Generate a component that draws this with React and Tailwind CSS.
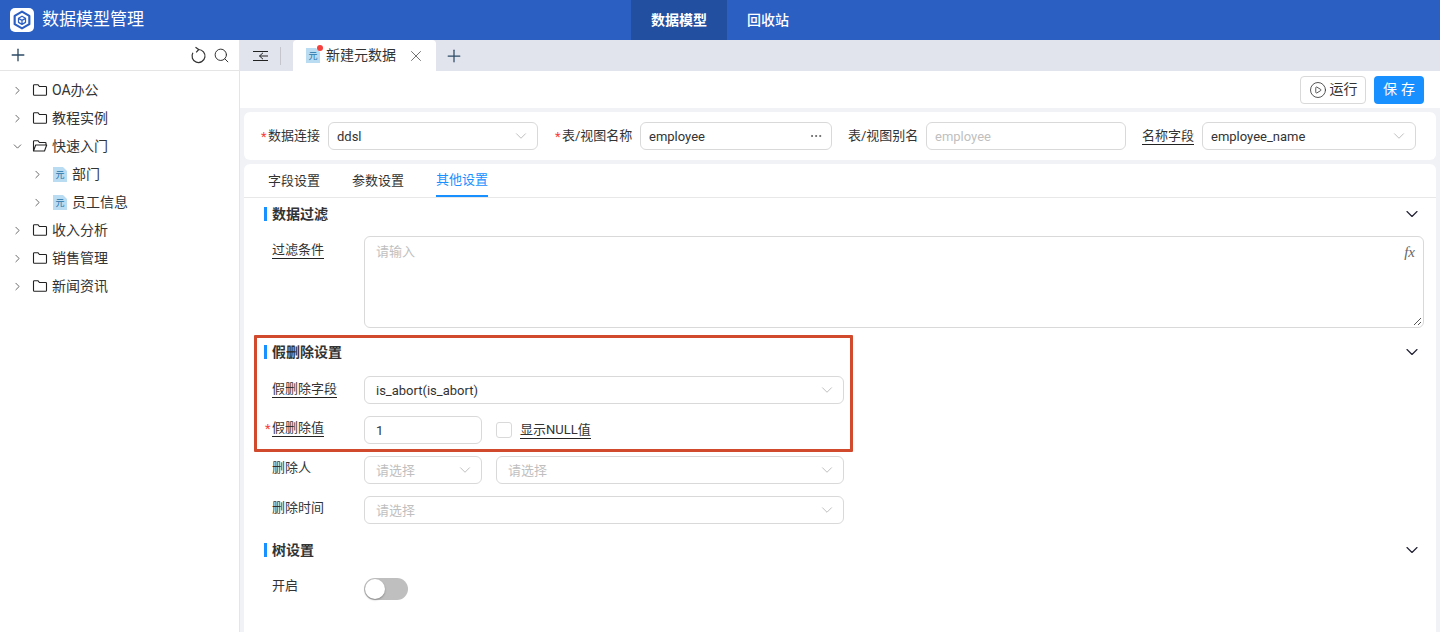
import { ChevronDown, ChevronRight, Plus, Search, X, Ellipsis, CirclePlay } from "lucide-react";

const font = "font-['Roboto','Noto_Sans_CJK_SC',sans-serif]";

function MetaIcon({ dot }) {
  return (
    <span className="relative flex h-[15px] w-[14px] shrink-0 items-center justify-center text-[9px] leading-none text-[#2472a8]">
      <svg className="absolute inset-0" width="14" height="15" viewBox="0 0 14 15">
        <path d="M0 0h10l4 4v11H0z" fill="#b9dcf2" />
      </svg>
      <span className="relative mt-[2px]">元</span>
      {dot && <span className="absolute -right-[3px] -top-[3px] h-[6px] w-[6px] rounded-full bg-[#f5403d]" />}
    </span>
  );
}

function FolderIcon({ open }) {
  return (
    <svg width="16" height="16" viewBox="0 0 16 16" fill="none" stroke="#222" strokeWidth="1.1" strokeLinejoin="round" className="mr-[4px] shrink-0">
      {open ? (
        <path d="M1.5 13V3.5a.8.8 0 0 1 .8-.8h3.6l1.5 1.8h5.8a.8.8 0 0 1 .8.8V7M1.5 13l2.2-6h11l-2.2 6z" />
      ) : (
        <path d="M1.5 3.5a.8.8 0 0 1 .8-.8h3.6l1.5 1.8h6.3a.8.8 0 0 1 .8.8v7.1a.8.8 0 0 1-.8.8H2.3a.8.8 0 0 1-.8-.8z" />
      )}
    </svg>
  );
}

function TreeRow({ label, open, child }) {
  const Arrow = open ? ChevronDown : ChevronRight;
  return (
    <div className={`flex h-7 items-center ${child ? "pl-[31px]" : "pl-[11px]"}`}>
      <Arrow size={13} className="mr-[8px] text-[#555]" strokeWidth={1.6} />
      {child ? (
        <span className="ml-px mr-[5px]"><MetaIcon /></span>
      ) : (
        <FolderIcon open={open} />
      )}
      <span className="pt-[1px] text-[14px] text-[#333]">{label}</span>
    </div>
  );
}

function Field({ value, placeholder, className = "", arrow, dots }) {
  return (
    <div className={`flex h-7 items-center justify-between rounded-[6px] border border-[#d9d9d9] bg-white pl-2 pr-[7px] text-[13px] ${className}`}>
      <span className={`pt-[1px] ${value ? "text-[#333]" : "text-[#bfbfbf]"}`}>{value || placeholder}</span>
      {arrow && <ChevronDown size={18} strokeWidth={1} className="text-[#aaa]" />}
      {dots && <Ellipsis size={14} strokeWidth={1.5} className="mr-[1px] text-[#555]" />}
    </div>
  );
}

function Label({ children, required, underline, className = "" }) {
  return (
    <div className={`relative shrink-0 text-[13px] leading-5 text-[#333] ${className}`}>
      {required && <span className="absolute -left-[7px] top-[1px] text-[#f5403d]">*</span>}
      <span className={underline ? "border-b border-[#222] pb-[1px]" : ""}>{children}</span>
    </div>
  );
}

function Section({ title, className = "" }) {
  return (
    <div className={`flex h-5 items-center justify-between pl-[20px] pr-[14px] ${className}`}>
      <div className="flex items-center gap-[5px]">
        <span className="h-[14px] w-[3px] bg-[#1890ff]" />
        <span className="text-[14px] font-bold text-[#333]">{title}</span>
      </div>
      <ChevronDown size={20} strokeWidth={1.4} className="text-[#223]" />
    </div>
  );
}

function FormRow({ className = "", children }) {
  return <div className={`flex items-start pl-[28px] ${className}`}>{children}</div>;
}

export default function App() {
  return (
    <div className={`flex h-[632px] w-[1440px] flex-col overflow-hidden bg-white ${font}`}>
      <header className="relative flex h-10 shrink-0 items-center bg-[#2b5fc2] pl-[10px]">
        <span className="flex h-6 w-6 items-center justify-center rounded-[5px] bg-white">
          <svg width="20" height="20" viewBox="0 0 24 24" fill="none" stroke="#2b5fc2" strokeLinejoin="round">
            <path d="M12 2 20.8 7v10L12 22 3.2 17V7z" strokeWidth="2.6" />
            <path d="M12 7.5 16.2 10v4.8L12 17.2 7.8 14.8V10zM7.8 10 12 12.4 16.2 10M12 12.4v4.8" strokeWidth="1.5" />
          </svg>
        </span>
        <span className="ml-[8px] text-[17px] text-white">数据模型管理</span>
        <nav className="ml-[487px] flex h-full text-[14px] text-white">
          <div className="flex w-[96px] items-center justify-center bg-[#224f9f] font-bold">数据模型</div>
          <div className="flex w-[82px] items-center justify-center font-medium">回收站</div>
        </nav>
      </header>

      <div className="flex min-h-0 flex-1">
        <aside className="w-[240px] shrink-0 border-r border-[#e5e5e5]">
          <div className="flex h-[31px] items-center justify-between border-b border-[#e5e5e5] pl-[8px] pr-[9px]">
            <Plus size={20} strokeWidth={1.6} className="text-[#2c4a66]" />
            <div className="flex items-center gap-[5px]">
              <svg width="19" height="19" viewBox="0 0 19 19" fill="none" stroke="#333" strokeWidth="1.2" strokeLinejoin="round">
                <path d="M9.5 3.5a6.5 6.5 0 1 1-5.6 3.2" />
                <path d="M6.5 1.2 9.7 3.5 7.2 6.4" />
              </svg>
              <Search size={17} strokeWidth={1.4} className="text-[#333]" />
            </div>
          </div>
          <div className="pt-[5px]">
            <TreeRow label="OA办公" />
            <TreeRow label="教程实例" />
            <TreeRow label="快速入门" open />
            <TreeRow label="部门" child />
            <TreeRow label="员工信息" child />
            <TreeRow label="收入分析" />
            <TreeRow label="销售管理" />
            <TreeRow label="新闻资讯" />
          </div>
        </aside>

        <main className="relative flex min-w-0 flex-1 flex-col bg-[#f0f2f5]">
          <div className="flex h-[31px] shrink-0 items-center bg-[#e1e4ed]">
            <div className="flex w-[41px] items-center justify-between pl-[13px]">
              <svg width="15" height="14" viewBox="0 0 15 14" fill="none" stroke="#222" strokeWidth="1">
                <path d="M0 2.5h15M0 11.5h15M6.5 7H15M10 3.8 6.5 7l3.5 3.2" />
              </svg>
              <span className="h-[18px] w-px bg-[#c4c6cc]" />
            </div>
            <div className="ml-[12px] flex h-full w-[143px] items-center rounded-t-[4px] bg-white pl-[13px]">
              <MetaIcon dot />
              <span className="ml-[6px] text-[14px] text-[#333]">新建元数据</span>
              <X size={18} strokeWidth={1.1} className="ml-[11px] text-[#555]" />
            </div>
            <Plus size={20} strokeWidth={1.5} className="ml-[8px] text-[#2c4a66]" />
          </div>

          <div className="flex h-[37px] shrink-0 items-center justify-end gap-[8px] bg-white pr-[16px]">
            <button className="flex h-7 w-[66px] items-center justify-center gap-[3px] rounded-[4px] border border-[#d9d9d9] bg-white text-[14px] text-[#333]">
              <CirclePlay size={18} strokeWidth={1.1} />
              运行
            </button>
            <button className="h-7 w-[50px] rounded-[4px] bg-[#1890ff] pl-[4px] text-[14px] tracking-[4px] text-white">保存</button>
          </div>

          <div className="mx-[4px] mt-[4px] flex h-[48px] shrink-0 items-center rounded-[6px] bg-white pl-[24px] pr-[16px]">
            <Label required className="w-[60px]">数据连接</Label>
            <Field value="ddsl" arrow className="w-[210px]" />
            <Label required className="ml-[24px] w-[78px]">表/视图名称</Label>
            <Field value="employee" dots className="w-[192px]" />
            <Label className="ml-[16px] w-[78px]">表/视图别名</Label>
            <Field placeholder="employee" className="w-[200px]" />
            <Label underline className="ml-[16px] w-[60px]">名称字段</Label>
            <Field value="employee_name" arrow className="w-[214px]" />
          </div>

          <div className="mx-[4px] mt-[4px] min-h-0 flex-1 rounded-t-[6px] bg-white">
            <div className="flex h-[34px] gap-[32px] border-b border-[#e8e8e8] pl-[24px] text-[13px] text-[#333]">
              <span className="flex items-center pt-[1px]">字段设置</span>
              <span className="flex items-center pt-[1px]">参数设置</span>
              <span className="flex items-center border-b-2 border-[#1890ff] pt-[1px] text-[#1890ff]">其他设置</span>
            </div>

            <Section title="数据过滤" className="mt-[6px]" />
            <FormRow className="mt-[12px]">
              <Label underline className="mt-[4px] w-[92px]">过滤条件</Label>
              <div className="relative h-[92px] w-[1060px] rounded-[6px] border border-[#d9d9d9] px-[11px] py-[5px] text-[13px] text-[#bfbfbf]">
                请输入
                <span className="absolute right-[8px] top-[4px] font-['Liberation_Serif',serif] text-[15px] italic text-[#666]">fx</span>
                <svg className="absolute bottom-[1px] right-[1px]" width="9" height="9" viewBox="0 0 9 9" stroke="#555" strokeWidth="1">
                  <path d="M1 8 8 1M5 8l3-3" />
                </svg>
              </div>
            </FormRow>

            <Section title="假删除设置" className="mt-[14px]" />
            <FormRow className="mt-[14px]">
              <Label underline className="mt-[3px] w-[92px]">假删除字段</Label>
              <Field value="is_abort(is_abort)" arrow className="w-[480px] pl-[11px]" />
            </FormRow>
            <FormRow className="mt-[12px]">
              <Label required underline className="mt-[2px] w-[92px]">假删除值</Label>
              <Field value="1" className="w-[118px] pl-[11px]" />
              <span className="ml-[14px] mt-[6px] h-4 w-4 rounded-[3px] border border-[#d9d9d9]" />
              <Label underline className="ml-[8px] mt-[4px]">显示NULL值</Label>
            </FormRow>
            <FormRow className="mt-[12px]">
              <Label className="mt-[2px] w-[92px]">删除人</Label>
              <Field placeholder="请选择" arrow className="w-[118px] pl-[11px]" />
              <Field placeholder="请选择" arrow className="ml-[14px] w-[348px] pl-[11px]" />
            </FormRow>
            <FormRow className="mt-[12px]">
              <Label className="mt-[2px] w-[92px]">删除时间</Label>
              <Field placeholder="请选择" arrow className="w-[480px] pl-[11px]" />
            </FormRow>

            <Section title="树设置" className="mt-[16px]" />
            <FormRow className="mt-[18px]">
              <Label className="-mt-[2px] w-[92px]">开启</Label>
              <span className="flex h-[22px] w-[44px] items-center rounded-full bg-[#bfbfbf] pl-[1px]">
                <span className="h-5 w-5 rounded-full bg-white shadow-[0_1px_2px_rgba(0,0,0,0.3)]" />
              </span>
            </FormRow>
          </div>

          {/* 标注框 */}
          <div className="pointer-events-none absolute left-[14px] top-[295px] h-[117px] w-[599px] rounded-[1px] border-[3px] border-[#d24a2e]" />
        </main>
      </div>
    </div>
  );
}
